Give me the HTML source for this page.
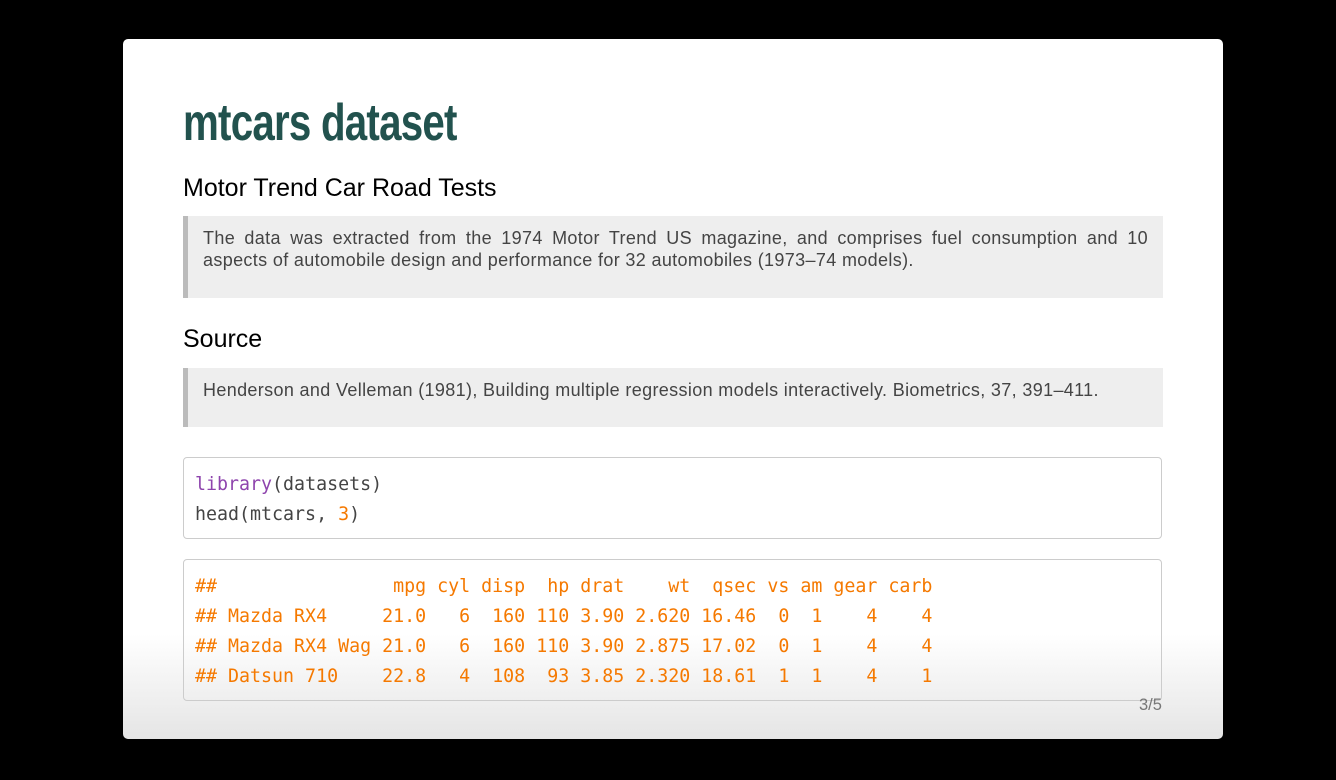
<!DOCTYPE html>
<html><head><meta charset="utf-8"><style>
html,body{margin:0;padding:0;background:#000;width:1336px;height:780px;overflow:hidden}
.slide{position:absolute;left:123px;top:39px;width:1100px;height:700px;border-radius:5px;background:linear-gradient(to bottom,#fff 0,#fff 595px,#e5e5e5 700px);font-family:"Liberation Sans",sans-serif}
h1{position:absolute;left:60px;top:54px;margin:0;font-size:52px;font-weight:bold;color:#22524e;letter-spacing:-1px;transform:scaleX(0.775);transform-origin:left;white-space:nowrap}
h2{position:absolute;left:60px;margin:0;font-weight:normal;font-size:25px;color:#000;letter-spacing:0}
.bq{position:absolute;left:60px;width:945px;background:#eee;border-left:5px solid #bbb;padding:11px 15px 0 15px;font-size:18px;letter-spacing:0.35px;line-height:22px;color:#444;text-align:justify;box-sizing:content-box}
.code{position:absolute;left:60px;width:979px;border:1px solid #ccc;border-radius:4px;font-family:"DejaVu Sans Mono",monospace;font-size:18.3px;line-height:30px;padding:12px 0 0 11px;box-sizing:border-box;white-space:pre;color:#444}
.o{color:#f57900}.k{color:#8e44ad}
.pg{position:absolute;left:1016px;top:657px;font-size:16.5px;color:#777}
</style></head><body><div class="slide">
<h1>mtcars dataset</h1>
<h2 style="top:135px">Motor Trend Car Road Tests</h2>
<div class="bq" style="top:177px;height:71px">The data was extracted from the 1974 Motor Trend US magazine, and comprises fuel consumption and 10 aspects of automobile design and performance for 32 automobiles (1973–74 models).</div>
<h2 style="top:286px">Source</h2>
<div class="bq" style="top:329px;height:48px">Henderson and Velleman (1981), Building multiple regression models interactively. Biometrics, 37, 391–411.</div>
<div class="code" style="top:418px;height:82px"><span class="k">library</span>(datasets)
head(mtcars, <span class="o">3</span>)</div>
<div class="code o" style="top:520px;height:142px">##                mpg cyl disp  hp drat    wt  qsec vs am gear carb
## Mazda RX4     21.0   6  160 110 3.90 2.620 16.46  0  1    4    4
## Mazda RX4 Wag 21.0   6  160 110 3.90 2.875 17.02  0  1    4    4
## Datsun 710    22.8   4  108  93 3.85 2.320 18.61  1  1    4    1</div>
<div class="pg">3/5</div>
</div></body></html>
